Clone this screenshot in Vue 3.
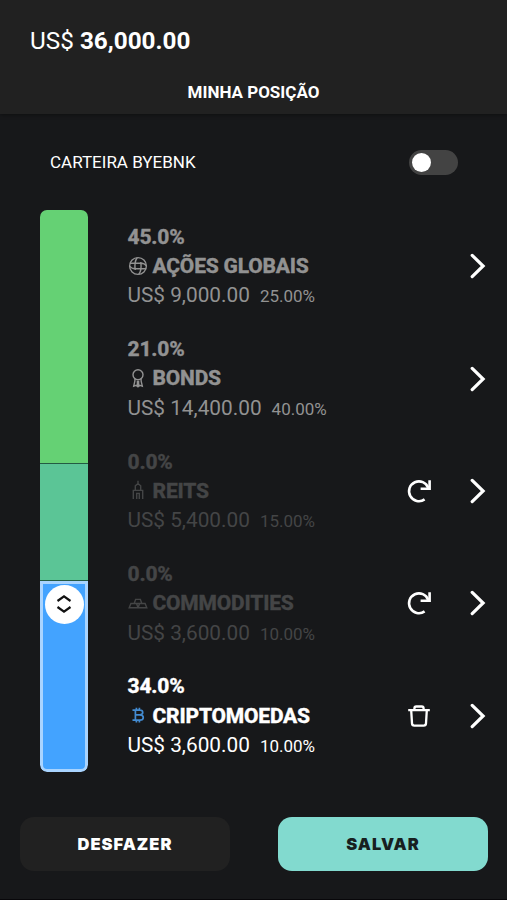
<script setup>
import { ref } from 'vue'

const automatic = ref(false)

const assets = ref([
  { name: 'AÇÕES GLOBAIS', icon: 'globe', share: 45, value: '9,000.00', current: '25.00%', state: 'idle', action: null },
  { name: 'BONDS', icon: 'medal', share: 21, value: '14,400.00', current: '40.00%', state: 'idle', action: null },
  { name: 'REITS', icon: 'building', share: 0, value: '5,400.00', current: '15.00%', state: 'removed', action: 'restore' },
  { name: 'COMMODITIES', icon: 'gold', share: 0, value: '3,600.00', current: '10.00%', state: 'removed', action: 'restore' },
  { name: 'CRIPTOMOEDAS', icon: 'bitcoin', share: 34, value: '3,600.00', current: '10.00%', state: 'active', action: 'delete' }
])
</script>

<template>
  <div class="screen">
    <header class="header">
      <div class="total"><span>US$</span> <b>36,000.00</b></div>
      <h1 class="title">MINHA POSIÇÃO</h1>
    </header>

    <div class="wallet">
      <span class="wallet-name">CARTEIRA BYEBNK</span>
      <button class="toggle" :class="{ on: automatic }" @click="automatic = !automatic">
        <span class="knob"></span>
      </button>
    </div>

    <main class="position">
      <div class="bar">
        <div class="part green" :style="{ height: assets[0].share + '%' }"></div>
        <div class="part teal" :style="{ height: assets[1].share + '%' }"></div>
        <div class="part blue" :style="{ height: assets[4].share + '%' }">
          <div class="handle">
            <svg width="16" height="20" viewBox="0 0 16 20">
              <path d="M1.5 7 8 2.4 14.5 7M1.5 13 8 17.6l6.5-4.6" />
            </svg>
          </div>
        </div>
      </div>

      <ul class="assets">
        <li v-for="asset in assets" :key="asset.name" class="asset">
          <div class="info" :class="asset.state">
            <div class="share">{{ asset.share.toFixed(1) }}%</div>
            <div class="name">
              <svg class="icon" :class="asset.icon" width="20" height="20" viewBox="0 0 20 20">
                <template v-if="asset.icon === 'globe'">
                  <circle cx="10" cy="10" r="8.4" />
                  <path d="M9.2 1.8C7 4.5 6.6 9.5 7.2 14M12.8 6c.6 4.5.2 9.500-2 12.200M1.800 7.200H14.500M5.500 12.800H18.200M1.600 10c1 1.600 3 2.800 5.500 2.800M18.400 10c-1-1.600-3-2.800-5.500-2.800" />
                </template>
                <template v-else-if="asset.icon === 'medal'">
                  <circle cx="10" cy="6.8" r="5" />
                  <path d="M6.900 10.800v2l-1.200 5.400 2.400-.8 1.300 1V13.500h1.200v4.900l1.300-1 2.400.8-1.200-5.400v-2" />
                </template>
                <template v-else-if="asset.icon === 'building'">
                  <path d="M10 .8v3M7.300 10V5.800L10 3.600l2.700 2.200V10M5.300 19v-8.600h9.400V19M8.700 19v-5.600h2.600V19" />
                </template>
                <template v-else-if="asset.icon === 'gold'">
                  <path d="M6.200 10.500 7.600 6.400h4.800l1.400 4.100H6.200ZM1.200 14.800l1.700-4.300h5.600l1.600 4.300H1.200ZM10.100 14.800l1.500-4.300h5.500l1.700 4.300h-8.700Z" />
                </template>
                <template v-else>
                  <path d="M4.500 5.200h7.300c3.900 0 3.900 4.600 0 4.600H7.400M11.800 9.800c4.600 0 4.600 5.400 0 5.400H4.500M7.400 5.200v10M8.400 2.800v2.200M11.400 2.800v2.200M8.400 15.200v2.200M11.400 15.200v2.200" />
                </template>
              </svg>
              <span>{{ asset.name }}</span>
            </div>
            <div class="value">US$ {{ asset.value }}<small>{{ asset.current }}</small></div>
          </div>

          <button v-if="asset.action" class="action">
            <svg v-if="asset.action === 'restore'" class="restore" width="26" height="26" viewBox="0 0 26 26">
              <path d="M18.600 21.400A9.900 9.900 0 1 1 22.300 10" />
              <path d="M23.600 2.200v8.600h-9" />
            </svg>
            <svg v-else class="trash" width="26" height="26" viewBox="0 0 26 26">
              <path d="M2.200 7.200h21.600M8.400 6.800V5.400c0-1.200.6-1.900 1.900-1.900h5.400c1.300 0 1.900.7 1.900 1.900v1.400M5.200 7.400l.8 13c.1 1.600.8 2.200 2.300 2.200h9.400c1.500 0 2.200-.6 2.300-2.200l.8-13" />
            </svg>
          </button>
          <button class="action arrow">
            <svg width="16" height="26" viewBox="0 0 16 26">
              <path d="m2.200 2.400 10.900 10.600L2.200 23.600" />
            </svg>
          </button>
        </li>
      </ul>
    </main>

    <footer class="footer">
      <button class="btn undo">DESFAZER</button>
      <button class="btn save">SALVAR</button>
    </footer>
  </div>
</template>

<style>
body {
  background: #17181a;
}
</style>

<style scoped>
* {
  box-sizing: border-box;
}
.screen {
  width: 507px;
  height: 900px;
  display: flex;
  flex-direction: column;
  background: #17181a;
  color: #fff;
  font-family: Roboto, "Liberation Sans", sans-serif;
  border-bottom: 1px solid #08070a;
  overflow: hidden;
}
button {
  border: 0;
  padding: 0;
  background: none;
  color: inherit;
}
svg {
  display: block;
  fill: none;
  stroke: currentColor;
}

.header {
  height: 114px;
  flex-shrink: 0;
  background: #212121;
  box-shadow: 0 1px 4px rgba(0, 0, 0, 0.4);
}
.total {
  padding: 26px 0 0 30px;
  font-size: 24.3px;
  line-height: 30px;
}
.title {
  margin: 26px 0 0;
  text-align: center;
  font-size: 17px;
  line-height: 20px;
  font-weight: 700;
}

.wallet {
  height: 96px;
  flex-shrink: 0;
  padding: 0 49px 0 50px;
  display: flex;
  align-items: center;
  justify-content: space-between;
  font-size: 17px;
}
.toggle {
  width: 49px;
  height: 25px;
  padding: 3px;
  border-radius: 13px;
  background: #434343;
}
.toggle.on {
  background: #82dacf;
}
.knob {
  display: block;
  width: 19px;
  height: 19px;
  border-radius: 50%;
  background: #fff;
}
.on .knob {
  margin-left: auto;
}

.position {
  height: 562px;
  flex-shrink: 0;
  display: flex;
  padding-left: 40px;
}
.bar {
  width: 48px;
  border-radius: 7px;
  overflow: hidden;
}
.green {
  background: #65d174;
}
.teal {
  background: #5bc596;
  border-top: 1px solid #235b43;
  border-bottom: 1px solid #235b43;
}
.blue {
  background: #43a3ff;
  border: 3px solid #a9d4ff;
  border-radius: 0 0 7px 7px;
}
.handle {
  width: 39px;
  height: 39px;
  margin: 1px auto 0;
  display: flex;
  align-items: center;
  justify-content: center;
  border-radius: 50%;
  background: #fff;
  color: #111;
}
.handle svg {
  stroke-width: 2.2;
}

.assets {
  flex: 1;
  margin: 0;
  padding: 0 21px 0 39.5px;
  display: grid;
  grid-template-rows: repeat(5, 1fr);
  list-style: none;
}
.asset {
  display: flex;
  align-items: center;
}
.info {
  flex: 1;
  padding-top: 2px;
  line-height: 29.3px;
}
.idle {
  color: #929292;
}
.removed {
  color: #444546;
}
.share,
.name {
  font-weight: 800;
  font-size: 21px;
  letter-spacing: -0.2px;
  -webkit-text-stroke: 0.3px currentColor;
}
.name {
  display: flex;
  align-items: center;
  gap: 5px;
}
.icon {
  margin: -1px 0 1px;
  stroke-width: 1.4;
}
.icon.bitcoin {
  color: #438bd1;
  stroke-width: 1.7;
}
.value {
  font-size: 20.8px;
  white-space: nowrap;
}
.value small {
  margin-left: 10px;
  font-size: 17px;
}
.action {
  margin-right: 38px;
}
.action svg {
  stroke-width: 2.6;
}
.action .trash {
  stroke-width: 2.3;
}
.arrow {
  margin-right: 0;
}
.arrow svg {
  stroke-width: 3.2;
  stroke-linecap: round;
}

.footer {
  display: flex;
  justify-content: space-between;
  padding: 45px 19px 0 20px;
}
.btn {
  width: 210px;
  height: 54px;
  border-radius: 14px;
  font-family: Inter, sans-serif;
  font-size: 16.5px;
  font-weight: 900;
  letter-spacing: 1px;
}
.undo {
  background: #212121;
}
.save {
  background: #82dacf;
  color: #17201f;
}
</style>
